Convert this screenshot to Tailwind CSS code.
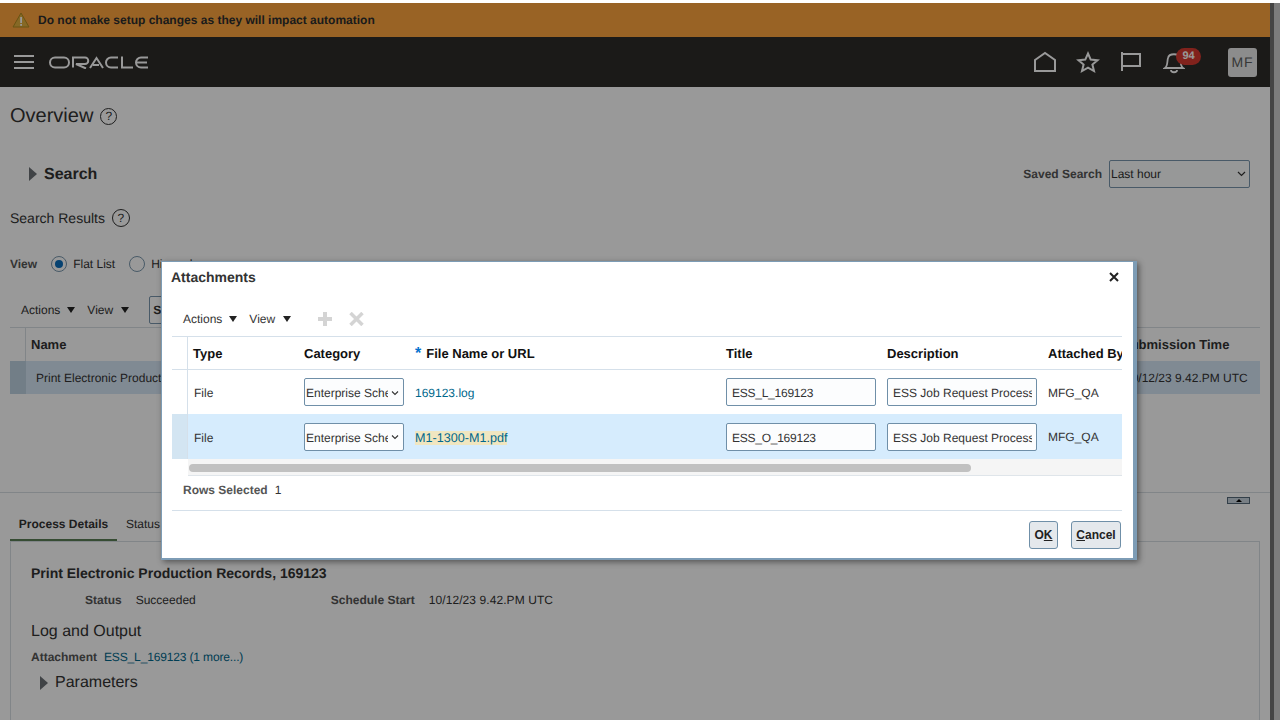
<!DOCTYPE html>
<html lang="en">
<head>
    <meta charset="UTF-8">
    <title>Overview</title>
    <script src="https://cdn.jsdelivr.net/npm/@tailwindcss/browser@4"></script>
</head>
<body class="bg-white text-[#333] font-['Liberation_Sans',Arial,sans-serif] [text-rendering:geometricPrecision]">
<div class="relative w-[1280px] h-[720px] overflow-hidden bg-white pt-[3px]">

    <!-- page under the dialog -->
    <div class="w-[1270px] h-[717px] flex flex-col">
        <div class="h-[34px] shrink-0 bg-[#ffa63e] flex items-center pl-[12px] gap-[8px]">
            <svg width="18" height="16" viewBox="0 0 18 16"><path d="M9 1 L17 15 H1 Z" fill="#e0b040" stroke="#b08a20" stroke-width="1"/><rect x="8.200" y="5" width="1.800" height="6" fill="#fff"/><rect x="8.200" y="12" width="1.800" height="1.800" fill="#fff"/></svg>
            <span class="text-[12px] font-bold text-[#2e2e2e]">Do not make setup changes as they will impact automation</span>
        </div>
        <header class="h-[50px] shrink-0 bg-[#2e2c29] flex items-center pl-[14px] pr-[13px]">
            <svg width="20" height="14" viewBox="0 0 20 14" fill="#fff"><rect y="0" width="20" height="2"/><rect y="6" width="20" height="2"/><rect y="12" width="20" height="2"/></svg>
            <span class="ml-[15px] w-[100px] h-[16px] flex items-center">
                <svg width="100" height="13" viewBox="0 0 100 13" fill="none" stroke="#fff" stroke-width="2">
                    <rect x="1" y="1.500" width="19" height="10" rx="5"/>
                    <path d="M24 11.500 V1.500 H36 a2.800 2.800 0 0 1 0 6.500 H27 L37 12.500"/>
                    <path d="M41 12 L47.500 2 L54 12 M44 9 H50"/>
                    <path d="M69 1.500 H62 a5 5 0 0 0 0 10 H69"/>
                    <path d="M73 0.500 V11.500 H84"/>
                    <path d="M99 1.500 H92 a5 5 0 0 0 0 10 H99 M87.500 6.500 H98"/>
                </svg>
            </span>
            <div class="ml-auto flex items-center">
                <svg class="mr-[19px]" width="24" height="22" viewBox="0 0 24 22" fill="none" stroke="#fff" stroke-width="2"><path d="M2 9 L12 2 L22 9 V20 H2 Z"/></svg>
                <svg class="mr-[20px]" width="24" height="22" viewBox="0 0 24 22" fill="none" stroke="#fff" stroke-width="2"><path d="M12 2.500 L14.700 8.600 L21.500 9.200 L16.400 13.500 L18 20 L12 16.600 L6 20 L7.600 13.500 L2.500 9.200 L9.300 8.600 Z"/></svg>
                <svg class="mr-[21px]" width="22" height="22" viewBox="0 0 22 22" fill="none" stroke="#fff" stroke-width="2"><path d="M2 1 V20 M2 3 H20 V15 H2"/></svg>
                <div class="relative w-[24px] h-[24px] mr-[41px]">
                    <svg width="22" height="24" viewBox="0 0 22 24" fill="none" stroke="#fff" stroke-width="1.800"><path d="M2 18 C5 16 4 11 5 8 C6 3 16 3 17 8 C18 11 17 16 20 18 Z M8 20 C8 23 14 23 14 20"/></svg>
                    <span class="absolute left-[13px] top-[-2px] w-[25px] h-[17px] rounded-full bg-[#d83a30] text-white text-[11px] font-bold flex items-center justify-center">94</span>
                </div>
                <div class="w-[29px] h-[29px] rounded-[3px] bg-[#e9e9e9] text-[#5c5c5c] text-[14px] tracking-[1px] flex items-center justify-center">MF</div>
            </div>
        </header>

        <main class="relative flex-1 pl-[10px] bg-white">
            <div class="flex items-center h-[30px] mt-[14px] gap-[7px]">
                <h1 class="text-[20px] text-[#333]">Overview</h1>
                <span class="w-[17px] h-[17px] rounded-full border border-[#333] text-[12px] flex items-center justify-center">?</span>
            </div>
            <div class="flex items-center mt-[29px] h-[28px] pr-[20px]">
                <span class="ml-[19px] w-0 h-0 border-y-[7px] border-y-transparent border-l-[8px] border-l-[#6b7075]"></span>
                <span class="ml-[7px] mt-[2px] text-[16px] font-bold">Search</span>
                <span class="ml-auto text-[12px] font-bold text-[#555]">Saved Search</span>
                <div class="ml-[7px] w-[141px] h-[28px] border border-[#7a97ad] rounded-[2px] bg-[#fcfdfe] flex items-center justify-between pl-[1px] pr-[3px] text-[12px]">
                    Last hour
                    <svg width="9" height="6" viewBox="0 0 9 6" fill="none" stroke="#333" stroke-width="1.200"><path d="M1 1 L4.500 4.500 L8 1"/></svg>
                </div>
            </div>
            <div class="flex items-center mt-[20px] h-[20px] gap-[7px]">
                <span class="text-[14px]">Search Results</span>
                <span class="w-[18px] h-[18px] rounded-full border border-[#333] text-[12px] flex items-center justify-center">?</span>
            </div>
            <div class="flex items-center mt-[26px] h-[20px] text-[12px]">
                <span class="font-bold text-[#555]">View</span>
                <span class="ml-[14px] w-[16px] h-[16px] rounded-full border border-[#7a97ad] bg-white flex items-center justify-center"><span class="w-[8px] h-[8px] rounded-full bg-[#0a6ebd]"></span></span>
                <span class="ml-[6px]">Flat List</span>
                <span class="ml-[14px] w-[16px] h-[16px] rounded-full border border-[#7a97ad] bg-white"></span>
                <span class="ml-[6px]">Hierarchy</span>
            </div>
            <div class="flex items-center mt-[23px] ml-[11px] h-[26px] text-[12px]">
                <span>Actions</span>
                <span class="ml-[7px] w-0 h-0 border-x-[4.500px] border-x-transparent border-t-[6px] border-t-[#222]"></span>
                <span class="ml-[12px]">View</span>
                <span class="ml-[8px] w-0 h-0 border-x-[4.500px] border-x-transparent border-t-[6px] border-t-[#222]"></span>
                <span class="ml-[20px] w-[30px] h-[28px] rounded-[2px] border border-[#7a97ad] font-bold pl-[3px] flex items-center">S</span>
            </div>
            <div class="mt-[4px] w-[1250px] h-[34px] border-t border-[#d8dee3] flex items-center text-[13px] font-bold">
                <span class="w-[16px] h-full border-r border-[#d8dee3]"></span>
                <span class="pl-[5px]">Name</span>
                <span class="ml-auto w-[138px] whitespace-nowrap">Submission Time</span>
            </div>
            <div class="w-[1250px] h-[33px] bg-[#d6e6f5] flex items-center text-[12px]">
                <span class="w-[16px] h-full bg-[#bfd2e2]"></span>
                <span class="pl-[10px]">Print Electronic Production Records</span>
                <span class="ml-auto w-[135px] whitespace-nowrap">10/12/23 9.42.PM UTC</span>
            </div>

            <div class="absolute left-0 right-0 top-[405px] border-t border-[#d8dee3]">
                <div class="absolute right-[20px] top-[4px] w-[23px] h-[7px] border border-[#55697a] bg-[#c8d4de] flex items-center justify-center"><span class="w-0 h-0 border-x-[3px] border-x-transparent border-b-[3px] border-b-black"></span></div>
            </div>
            <div class="absolute left-[10px] right-[10px] top-[429px] h-[26px] flex items-start text-[12px]">
                <span class="w-[107px] h-[26px] border-b-[3px] border-[#5a7f56] font-bold text-center leading-[15px] text-[#333] pt-[1px]">Process Details</span>
                <span class="ml-[9px] pt-[1px] leading-[15px]">Status</span>
            </div>
            <div class="absolute left-[10px] right-[10px] top-[454px] bottom-0 border border-[#d8dee3] border-b-0 pl-[20px]">
                <h2 class="mt-[23px] text-[14px] font-bold leading-[16px]">Print Electronic Production Records, 169123</h2>
                <div class="flex items-center text-[12px] mt-[12px] h-[14px]">
                    <span class="ml-[54px] font-bold text-[#555]">Status</span>
                    <span class="ml-[14px]">Succeeded</span>
                    <span class="ml-[135px] font-bold text-[#555]">Schedule Start</span>
                    <span class="ml-[14px] tracking-[0.08px]">10/12/23 9.42.PM UTC</span>
                </div>
                <h3 class="mt-[15px] text-[16px] leading-[20px]">Log and Output</h3>
                <div class="flex items-center text-[12px] mt-[8px] h-[14px]">
                    <span class="font-bold text-[#555]">Attachment</span>
                    <span class="ml-[7px] text-[#00688c] tracking-[-0.15px]">ESS_L_169123 (1 more...)</span>
                </div>
                <div class="flex items-center mt-[9px] h-[20px] ml-[9px]">
                    <span class="w-0 h-0 border-y-[7px] border-y-transparent border-l-[8px] border-l-[#6b7075]"></span>
                    <span class="ml-[7px] text-[16px]">Parameters</span>
                </div>
            </div>
        </main>
    </div>

    <!-- modal glass -->
    <div class="absolute left-0 right-0 top-[3px] bottom-0 bg-black/40"></div>
    <div class="absolute left-[1270px] top-[3px] bottom-0 w-[4px] bg-[#444]"></div>
    <div class="absolute left-[1274px] top-[3px] bottom-0 right-0 bg-[#7c7c7c]"></div>

    <!-- attachments dialog -->
    <div class="absolute left-[161px] top-[261px] w-[976px] h-[299px] bg-white border-t border-l border-r-4 border-b-2 border-[#7d9cb5] shadow-[2px_2px_6px_rgba(0,0,0,0.45)] pl-[10px]">
        <div class="flex items-center justify-between h-[30px] pr-[14px] -ml-[1px]">
            <h2 class="text-[14px] font-bold text-[#333]">Attachments</h2>
            <svg width="10" height="10" viewBox="0 0 10 10" stroke="#222" stroke-width="2"><path d="M1 1 L9 9 M9 1 L1 9"/></svg>
        </div>
        <div class="flex items-center h-[44px] pt-[10px] pl-[11px] text-[12px]">
            <span>Actions</span>
            <span class="ml-[7px] w-0 h-0 border-x-[4.500px] border-x-transparent border-t-[6px] border-t-[#222]"></span>
            <span class="ml-[12px]">View</span>
            <span class="ml-[8px] w-0 h-0 border-x-[4.500px] border-x-transparent border-t-[6px] border-t-[#222]"></span>
            <svg class="ml-[27px]" width="14" height="14" viewBox="0 0 14 14" fill="#d4d4d4"><path d="M5 0 H9 V5 H14 V9 H9 V14 H5 V9 H0 V5 H5 Z"/></svg>
            <svg class="ml-[17px]" width="15" height="14" viewBox="0 0 15 14" stroke="#d4d4d4" stroke-width="3.500"><path d="M1.500 1 L13.500 13 M13.500 1 L1.500 13"/></svg>
        </div>
        <div class="w-[950px] border-t border-[#d5e0ea]">
            <div class="grid grid-cols-[16px_116px_111px_311px_161px_161px_74px] h-[33px] items-center text-[13px] font-bold text-[#111] border-b border-[#d5e0ea]">
                <span class="h-full border-r border-[#d5e0ea]"></span>
                <span class="pl-[5px] pt-[2px]">Type</span>
                <span class="pt-[2px]">Category</span>
                <span class="pt-[2px] whitespace-nowrap"><span class="text-[#0572ce] text-[16px] leading-[10px] mr-[5px]">*</span>File Name or URL</span>
                <span class="pt-[2px]">Title</span>
                <span class="pt-[2px]">Description</span>
                <span class="pt-[2px] whitespace-nowrap overflow-hidden">Attached By</span>
            </div>
            <div class="grid grid-cols-[16px_116px_111px_311px_161px_161px_74px] h-[44px] items-center text-[12px]">
                <span class="h-full border-r border-[#d5e0ea]"></span>
                <span class="pl-[6px] pt-[2px]">File</span>
                <div class="w-[100px] h-[28px] border border-[#6f8fa8] rounded-[2px] bg-[#fcfdfe] flex items-center pl-[1px] pr-[3px] pt-[2px]"><span class="w-[82px] overflow-hidden whitespace-nowrap">Enterprise Scheduler</span><svg class="ml-[3px]" width="8" height="5" viewBox="0 0 8 5" fill="none" stroke="#333" stroke-width="1.100"><path d="M1 0.500 L4 3.500 L7 0.500"/></svg></div>
                <span class="text-[#00688c] pt-[1px]">169123.log</span>
                <div class="w-[150px] h-[28px] border border-[#6f8fa8] rounded-[2px] bg-[#fcfdfe] flex items-center pl-[5px] pt-[2px] tracking-[-0.25px]">ESS_L_169123</div>
                <div class="w-[150px] h-[28px] border border-[#6f8fa8] rounded-[2px] bg-[#fcfdfe] flex items-center pl-[5px] pt-[2px]"><span class="w-[139px] overflow-hidden whitespace-nowrap">ESS Job Request Process Output</span></div>
                <span class="pt-[1px]">MFG_QA</span>
            </div>
            <div class="grid grid-cols-[16px_116px_111px_311px_161px_161px_74px] h-[45px] items-center text-[12px] bg-[#d6ecfd]">
                <span class="h-full bg-[#d3e5f2] border-r border-[#d5e0ea]"></span>
                <span class="pl-[6px] pt-[2px]">File</span>
                <div class="w-[100px] h-[28px] border border-[#6f8fa8] rounded-[2px] bg-[#fcfdfe] flex items-center pl-[1px] pr-[3px] pt-[2px]"><span class="w-[82px] overflow-hidden whitespace-nowrap">Enterprise Scheduler</span><svg class="ml-[3px]" width="8" height="5" viewBox="0 0 8 5" fill="none" stroke="#333" stroke-width="1.100"><path d="M1 0.500 L4 3.500 L7 0.500"/></svg></div>
                <span class="pt-[3px]"><span class="text-[#00688c] text-[12.6px] bg-[#f0e6c0]">M1-1300-M1.pdf</span></span>
                <div class="w-[150px] h-[28px] border border-[#6f8fa8] rounded-[2px] bg-[#fcfdfe] flex items-center pl-[5px] pt-[2px] tracking-[-0.25px]">ESS_O_169123</div>
                <div class="w-[150px] h-[28px] border border-[#6f8fa8] rounded-[2px] bg-[#fcfdfe] flex items-center pl-[5px] pt-[2px]"><span class="w-[139px] overflow-hidden whitespace-nowrap">ESS Job Request Process Output</span></div>
                <span class="pt-[1px]">MFG_QA</span>
            </div>
            <div class="h-[17px] ml-[16px] bg-[#f5f5f5] border-b border-[#dfe5ea] pt-[5px] pl-[1px]">
                <div class="w-[782px] h-[8px] rounded-full bg-[#c1c1c1]"></div>
            </div>
        </div>
        <div class="w-[950px] h-[35px] border-b border-[#d5e0ea] flex items-center pl-[11px] pb-[6px] text-[12px]">
            <span class="font-bold text-[#555]">Rows Selected</span>
            <span class="ml-[7px] text-[#333]">1</span>
        </div>
        <div class="w-[949px] flex justify-end gap-[13px] pt-[10px]">
            <button class="w-[29px] h-[28px] rounded-[3px] border border-[#6f8fa8] bg-[#e4e8ec] text-[12px] font-bold text-[#222]">O<span class="underline">K</span></button>
            <button class="w-[50px] h-[28px] rounded-[3px] border border-[#6f8fa8] bg-[#e4e8ec] text-[12px] font-bold text-[#222]"><span class="underline">C</span>ancel</button>
        </div>
    </div>
</div>
</body>
</html>
